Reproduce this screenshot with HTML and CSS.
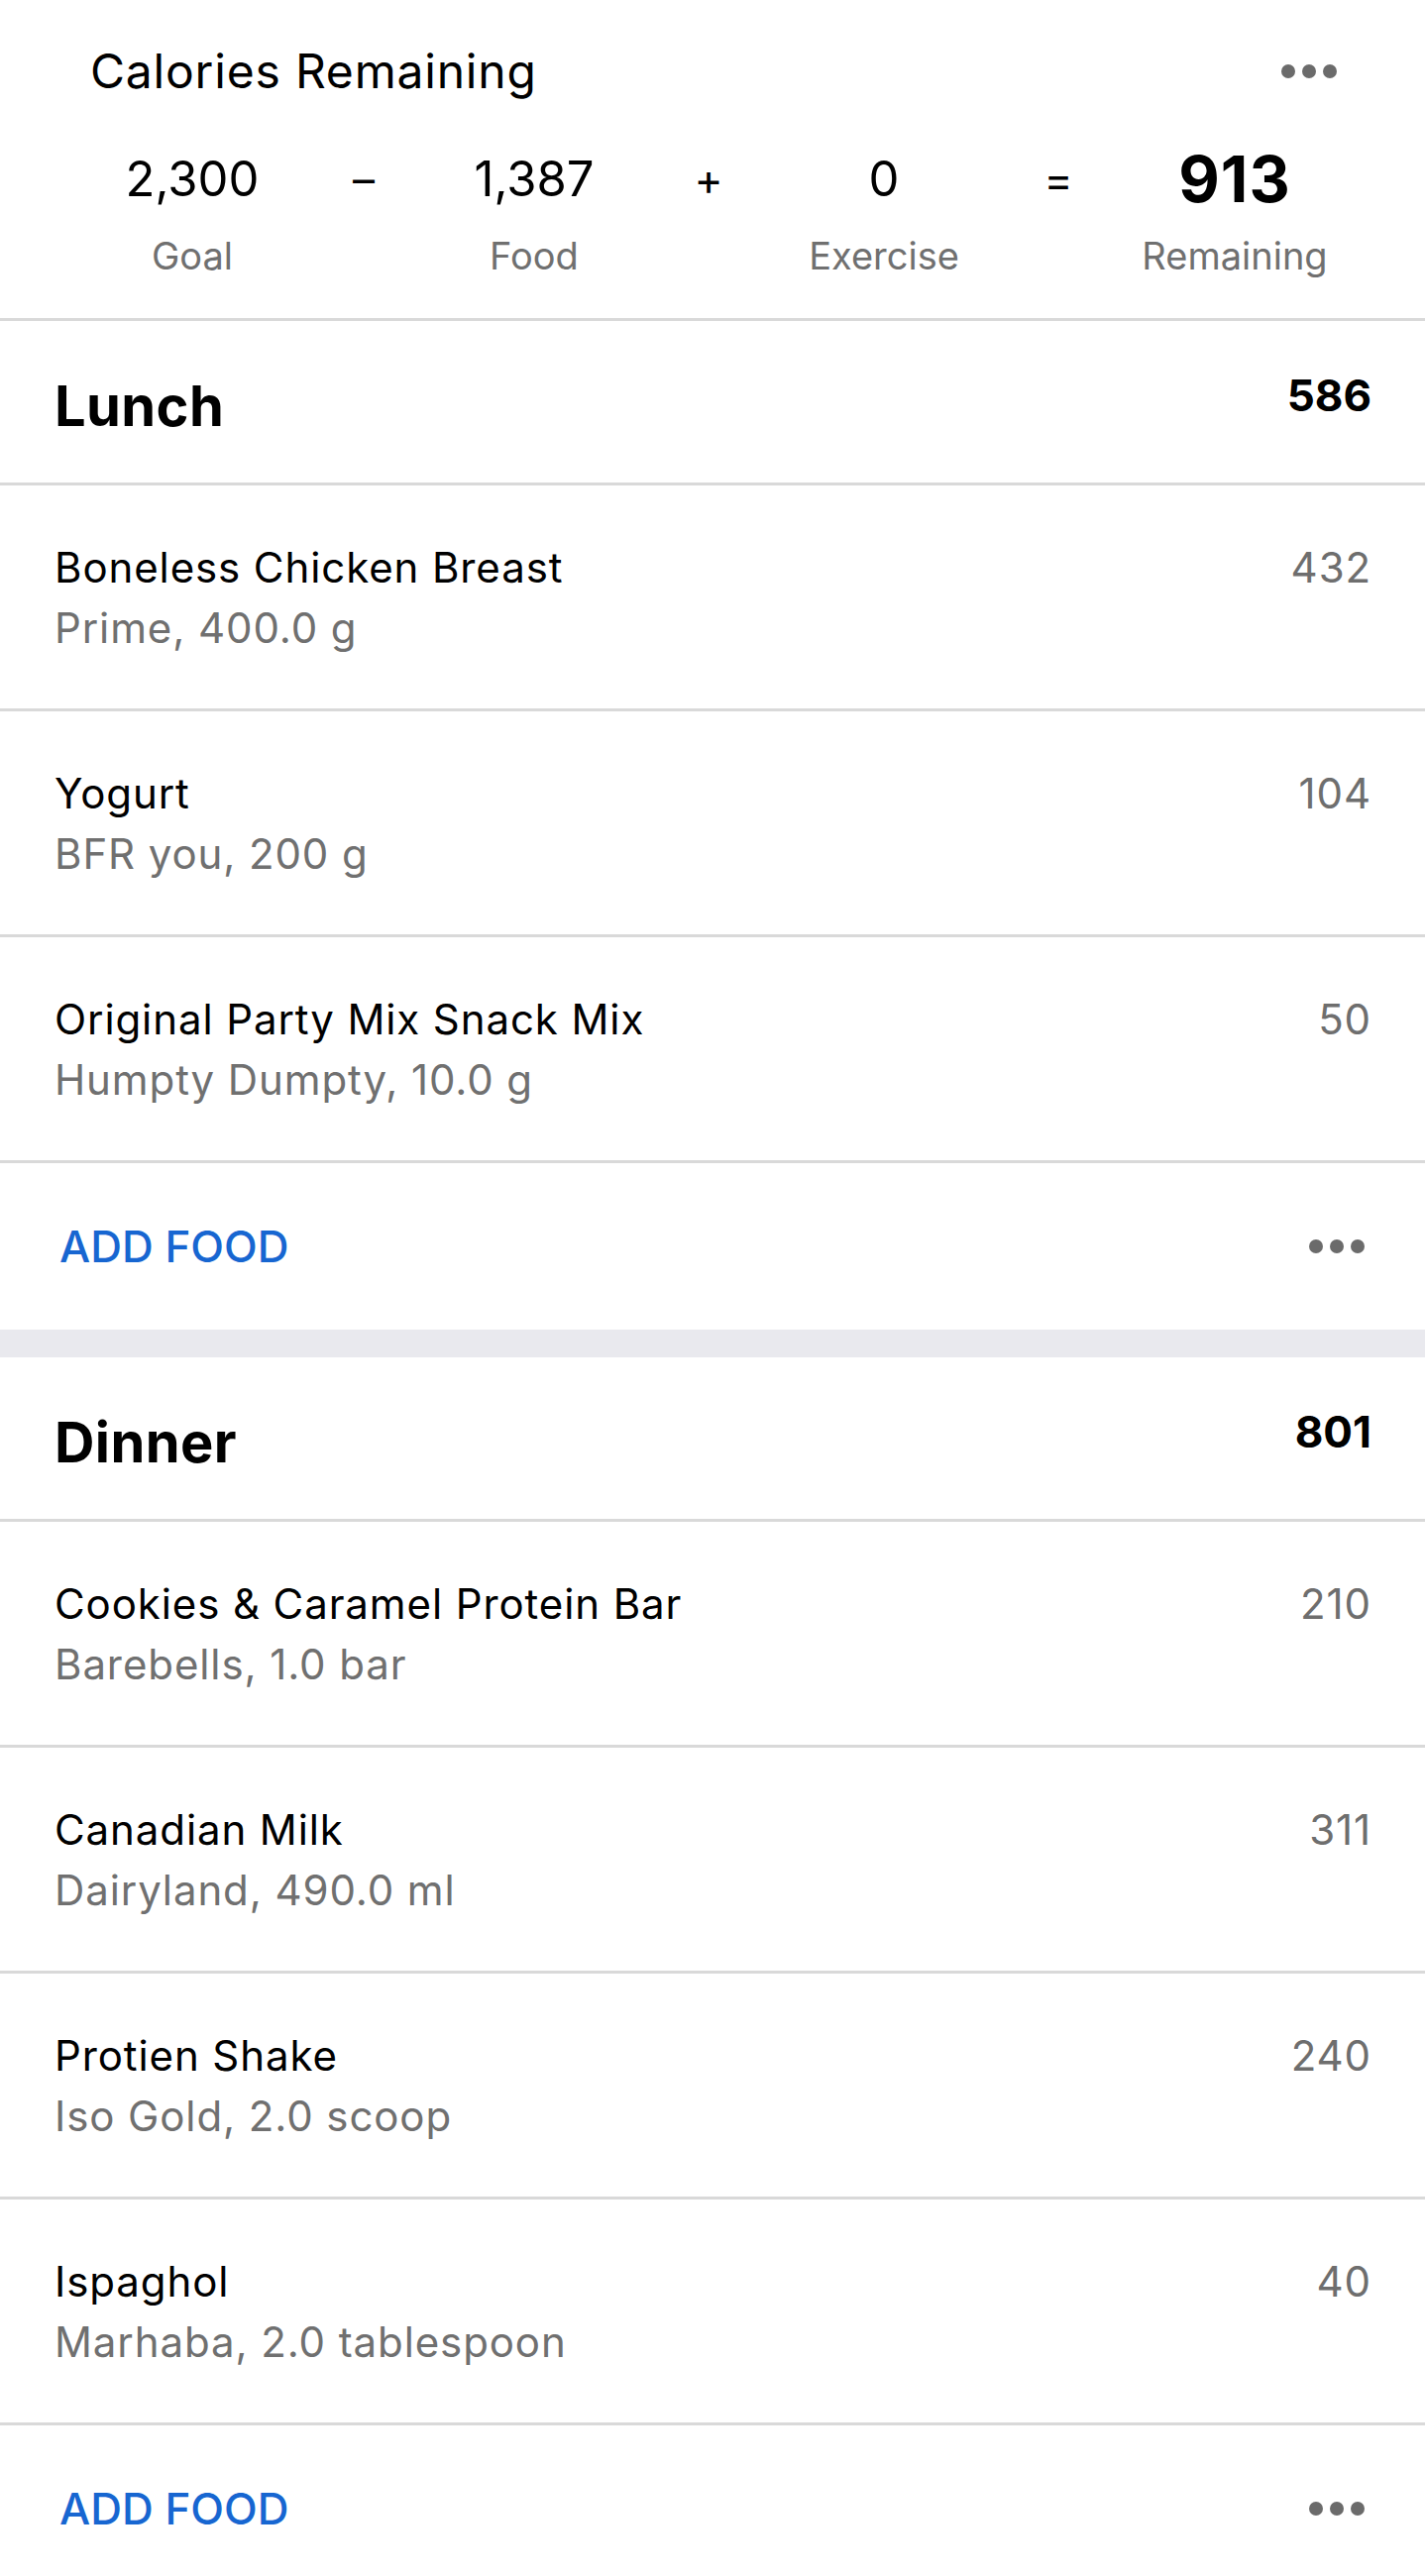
FILE: index.html
```html
<!DOCTYPE html>
<html lang="en">

<head>
    <meta charset="UTF-8">
    <meta name="viewport" content="width=device-width, initial-scale=1.0">
    <title>Diary</title>
    <link rel="stylesheet" href="styles.css">
</head>

<body>
    <div class="summary">
        <div class="summary-top">
            <h1 class="summary-title">Calories Remaining</h1>
            <span class="dots"><i></i><i></i><i></i></span>
        </div>
        <div class="equation">
            <div class="term"><span class="val">2,300</span><span class="lbl">Goal</span></div>
            <div class="op">&ndash;</div>
            <div class="term"><span class="val">1,387</span><span class="lbl">Food</span></div>
            <div class="op">+</div>
            <div class="term"><span class="val">0</span><span class="lbl">Exercise</span></div>
            <div class="op">=</div>
            <div class="term total"><span class="val">913</span><span class="lbl">Remaining</span></div>
        </div>
    </div>

    <!-- lunch -->
    <section class="meal">
        <div class="meal-head">
            <h2>Lunch</h2>
            <span class="meal-cals">586</span>
        </div>
        <ul class="entries">
            <li class="entry">
                <div class="entry-info">
                    <span class="entry-name">Boneless Chicken Breast</span>
                    <span class="entry-desc">Prime, 400.0 g</span>
                </div>
                <span class="entry-cals">432</span>
            </li>
            <li class="entry">
                <div class="entry-info">
                    <span class="entry-name">Yogurt</span>
                    <span class="entry-desc">BFR you, 200 g</span>
                </div>
                <span class="entry-cals">104</span>
            </li>
            <li class="entry">
                <div class="entry-info">
                    <span class="entry-name">Original Party Mix Snack Mix</span>
                    <span class="entry-desc">Humpty Dumpty, 10.0 g</span>
                </div>
                <span class="entry-cals">50</span>
            </li>
        </ul>
        <div class="meal-foot">
            <a class="add-food" href="#">ADD FOOD</a>
            <span class="dots"><i></i><i></i><i></i></span>
        </div>
    </section>

    <div class="band"></div>

    <!-- dinner -->
    <section class="meal">
        <div class="meal-head">
            <h2>Dinner</h2>
            <span class="meal-cals">801</span>
        </div>
        <ul class="entries">
            <li class="entry">
                <div class="entry-info">
                    <span class="entry-name">Cookies &amp; Caramel Protein Bar</span>
                    <span class="entry-desc">Barebells, 1.0 bar</span>
                </div>
                <span class="entry-cals">210</span>
            </li>
            <li class="entry">
                <div class="entry-info">
                    <span class="entry-name">Canadian Milk</span>
                    <span class="entry-desc">Dairyland, 490.0 ml</span>
                </div>
                <span class="entry-cals">311</span>
            </li>
            <li class="entry">
                <div class="entry-info">
                    <span class="entry-name">Protien Shake</span>
                    <span class="entry-desc">Iso Gold, 2.0 scoop</span>
                </div>
                <span class="entry-cals">240</span>
            </li>
            <li class="entry">
                <div class="entry-info">
                    <span class="entry-name">Ispaghol</span>
                    <span class="entry-desc">Marhaba, 2.0 tablespoon</span>
                </div>
                <span class="entry-cals">40</span>
            </li>
        </ul>
        <div class="meal-foot">
            <a class="add-food" href="#">ADD FOOD</a>
            <span class="dots"><i></i><i></i><i></i></span>
        </div>
    </section>
</body>

</html>
```

FILE: styles.css
```css
*{margin:0;padding:0;box-sizing:border-box;}
body{font-family:Inter,"Noto Sans",sans-serif;color:#000;background:#fff;overflow:hidden;}
ul{list-style:none;}
a{text-decoration:none;}

/* summary */
.summary{padding:44px 0 40px;border-bottom:3px solid #d9d9d9;}
.summary-top{display:flex;justify-content:space-between;align-items:center;padding:0 89px 0 91px;}
.summary-title{font-size:48px;font-weight:400;line-height:56px;letter-spacing:0.8px;}
.equation{display:grid;grid-template-columns:176px 170px 174px 178px 176px 176px 180px;padding-left:106px;margin-top:51px;}
.term{display:flex;flex-direction:column;align-items:center;}
.val{font-size:49px;line-height:60px;}
.total .val{font-size:64px;font-weight:700;letter-spacing:1px;}
.lbl{font-size:38px;line-height:46px;color:#707070;margin-top:24px;}
.op{font-size:44px;line-height:60px;text-align:center;}

/* dots */
.dots{display:flex;gap:7px;}
.dots i{width:14px;height:14px;border-radius:50%;background:#6b6b6b;}

/* meals */
.meal-head{display:flex;justify-content:space-between;align-items:flex-start;padding:52px 54px 43px 55px;border-bottom:3px solid #d9d9d9;}
.meal-head h2{font-size:56px;font-weight:700;line-height:68px;letter-spacing:0.4px;}
.meal-cals{font-size:44px;font-weight:700;line-height:47px;}
.entry{display:flex;justify-content:space-between;align-items:flex-start;padding:52px 54px 51px 55px;border-bottom:3px solid #d9d9d9;}
.entry-info{display:flex;flex-direction:column;}
.entry-name,.entry-desc,.entry-cals{font-size:42px;line-height:61px;letter-spacing:0.9px;}
.entry-desc{color:#707070;}
.entry-cals{color:#6e6e6e;}
.meal-foot{display:flex;justify-content:space-between;align-items:center;padding:54px 61px 54px 60px;}
.add-food{font-size:44px;font-weight:500;line-height:60px;color:#1766d1;}
.band{height:28px;background:#e9e9ee;}
```
